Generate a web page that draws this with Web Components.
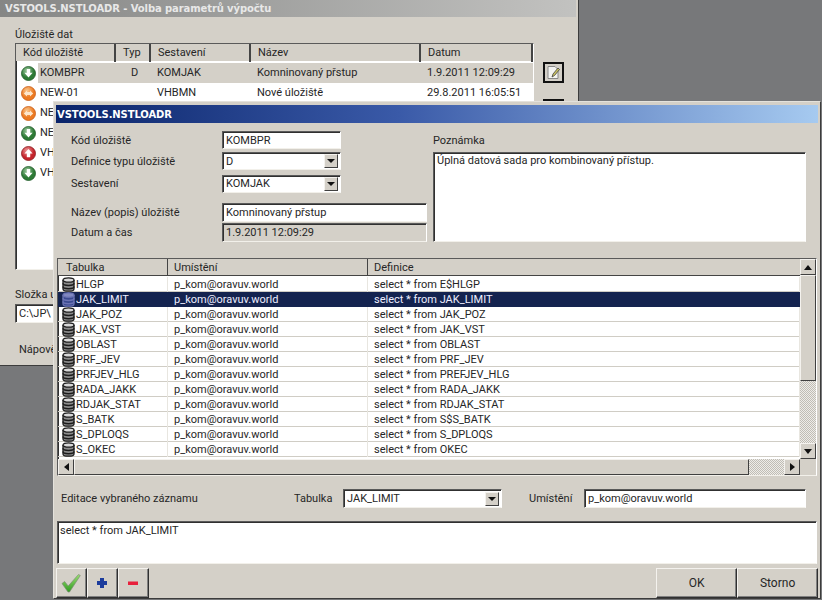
<!DOCTYPE html>
<html>
<head>
<meta charset="utf-8">
<title>VSTOOLS.NSTLOADR</title>
<style>
html, body { margin: 0; height: 100%; overflow: hidden; }
body { background: #77787a; position: relative; font: 11px Roboto, "Liberation Sans", sans-serif; color: #262626; }
#back { left: 0; top: 0; width: 579px; height: 366px; }
#front { left: 53px; top: 101px; width: 768px; height: 498px; }
</style>
</head>
<body>

<ui-window id="back" inactive>
  <span slot="title">VSTOOLS.NSTLOADR - Volba parametrů výpočtu</span>
  <store-panel></store-panel>
</ui-window>

<ui-window id="front">
  <span slot="title">VSTOOLS.NSTLOADR</span>
  <detail-form></detail-form>
  <source-grid></source-grid>
  <edit-panel></edit-panel>
</ui-window>

<script>
const SUNKEN = `
    border: 1px solid; border-color: #5a5a5a #fff #f2f0ea #5a5a5a;
    box-shadow: inset 1px 1px #303030;`;

// Window frame with a gradient title bar
class UiWindow extends HTMLElement {
    constructor() {
        super();
        this.attachShadow({ mode: 'open' });
        this.shadowRoot.innerHTML = `
            <style>
                :host {
                    position: absolute;
                    display: flex;
                    flex-direction: column;
                    box-sizing: border-box;
                    background: #d4d0c8;
                    border: 1px solid;
                    border-color: #e4e2dc #3c3c3c #3c3c3c #e4e2dc;
                    padding: 3px 2px 0;
                }
                .title {
                    height: 18px;
                    flex: none;
                    padding-left: 1px;
                    display: flex;
                    align-items: center;
                    font: bold 10px "DejaVu Sans", sans-serif;
                    letter-spacing: -.1px;
                    color: #fff;
                    background: linear-gradient(90deg, #0a246a 0%, #3a5aa8 45%, #a6caf0 100%);
                    white-space: nowrap;
                }
                :host([inactive]) { padding-top: 0; padding-left: 0; border-top: 0; border-left: 0; }
                :host([inactive]) .title {
                    height: 17px;
                    padding-left: 5px;
                    color: #e8e8e8;
                    background: linear-gradient(90deg, #858685 0%, #c2c2c0 100%);
                }
            </style>
            <div class="title"><slot name="title"></slot></div>
            <slot></slot>
        `;
    }
}

// Sunken edit box / combo box; the value is passed through the slot
class UiField extends HTMLElement {
    constructor() {
        super();
        this.attachShadow({ mode: 'open' });
        this.shadowRoot.innerHTML = `
            <style>
                :host {
                    display: flex;
                    box-sizing: border-box;
                    height: 18px;
                    background: #fff;
                    align-items: center;
                    padding: 0 2px 0 3px;
                    white-space: nowrap;
                    overflow: hidden;
                    ${SUNKEN}
                }
                :host([disabled]) { background: #d4d0c8; }
                .value { flex: 1; overflow: hidden; }
                .arrow { display: none; }
                :host([combo]) .arrow {
                    display: flex;
                    flex: none;
                    width: 14px;
                    height: 14px;
                    box-sizing: border-box;
                    align-items: center;
                    justify-content: center;
                    background: #d4d0c8;
                    border: 1px solid;
                    border-color: #f4f2ee #404040 #404040 #f4f2ee;
                }
                .arrow i {
                    border: 4px solid transparent;
                    border-top: 4px solid #111;
                    border-bottom: 0;
                }
            </style>
            <span class="value"><slot></slot></span>
            <span class="arrow"><i></i></span>
        `;
    }
}

// Scrollbar, the sizes of the parts come from attributes
class UiScrollbar extends HTMLElement {
    constructor() {
        super();
        this.attachShadow({ mode: 'open' });
    }

    connectedCallback() {
        const horizontal = this.hasAttribute('horizontal');
        const arrow = (dir) => {
            const a = {
                up: 'border-bottom:5px solid #111;border-top:0',
                down: 'border-top:5px solid #111;border-bottom:0',
                left: 'border-right:5px solid #111;border-left:0',
                right: 'border-left:5px solid #111;border-right:0'
            };
            return `<div class="btn"><i style="${a[dir]}"></i></div>`;
        };
        this.shadowRoot.innerHTML = `
            <style>
                :host {
                    display: flex;
                    flex-direction: ${horizontal ? 'row' : 'column'};
                    box-sizing: border-box;
                    background-color: #e6e4df;
                    background-image: conic-gradient(#c0bdb5 25%, #eeece8 0 50%, #c0bdb5 0 75%, #eeece8 0);
                    background-size: 2px 2px;
                }
                .btn, .thumb {
                    box-sizing: border-box;
                    background: #d4d0c8;
                    border: 1px solid;
                    border-color: #f4f2ee #404040 #404040 #f4f2ee;
                    flex: none;
                }
                .btn {
                    width: ${horizontal ? '16px' : '100%'};
                    height: ${horizontal ? '100%' : '16px'};
                    display: flex;
                    align-items: center;
                    justify-content: center;
                }
                .btn i { border: 4px solid transparent; }
                .thumb { ${horizontal ? 'width' : 'height'}: ${this.getAttribute('thumb')}px; }
                .rest { flex: 1; }
            </style>
            ${arrow(horizontal ? 'left' : 'up')}
            <div class="thumb"></div>
            <div class="rest"></div>
            ${arrow(horizontal ? 'right' : 'down')}
        `;
    }
}

// Round status icon with a white arrow
class StatusIcon extends HTMLElement {
    constructor() {
        super();
        this.attachShadow({ mode: 'open' });
    }

    connectedCallback() {
        const kind = this.getAttribute('kind');
        const colors = {
            down: ['#9cc89c', '#2d7a35', '#1f5a28'],
            up: ['#ee9a9a', '#c4242c', '#8c1a20'],
            both: ['#fac890', '#ec7a22', '#c85a14']
        }[kind];
        const arrows = {
            down: '<path d="M5.800 3h3.400v3.800h2.400L7.500 11.500 3.400 6.800h2.400z" fill="#fff"/>',
            up: '<path d="M7.500 3l4.100 4.600H9.200v3.600H5.800V7.600H3.400z" fill="#fff"/>',
            both: '<path d="M2.800 7.500L6 4.400V6h3V4.400l3.200 3.100L9 10.600V9H6v1.600z" fill="#fde6cc"/>'
        }[kind];
        this.shadowRoot.innerHTML = `
            <style>:host { display: inline-flex; width: 15px; height: 15px; flex: none; }</style>
            <svg width="15" height="15" viewBox="0 0 15 15">
                <defs><radialGradient id="g" cx=".4" cy=".3" r=".8">
                    <stop offset="0" stop-color="${colors[0]}"/>
                    <stop offset=".6" stop-color="${colors[1]}"/>
                </radialGradient></defs>
                <circle cx="7.500" cy="7.500" r="7" fill="url(#g)" stroke="${colors[2]}" stroke-width=".8"/>
                ${arrows}
            </svg>
        `;
    }
}

// Database cylinder in the grid rows
class DbIcon extends HTMLElement {
    constructor() {
        super();
        this.attachShadow({ mode: 'open' });
    }

    connectedCallback() {
        const selected = this.hasAttribute('selected');
        const line = selected ? '#6c74b4' : '#1c1c1c';
        const fill = selected ? '#3a4a90' : '#8c8c8c';
        const top = selected ? '#8088c0' : '#d8d8d8';
        this.shadowRoot.innerHTML = `
            <style>:host { display: inline-flex; width: 13px; height: 15px; flex: none; }</style>
            <svg width="13" height="15" viewBox="0 0 13 15">
                <path d="M1 3v9c0 1.300 2.400 2.200 5.500 2.200S12 13.300 12 12V3" fill="${fill}" stroke="${line}" stroke-width="1.300"/>
                <ellipse cx="6.500" cy="3" rx="5.500" ry="2.200" fill="${top}" stroke="${line}" stroke-width="1.300"/>
                <path d="M1 6.300c0 1.300 2.400 2.200 5.500 2.200S12 7.600 12 6.300M1 9.500c0 1.300 2.400 2.200 5.500 2.200S12 10.800 12 9.500" fill="none" stroke="${line}" stroke-width="1.500"/>
            </svg>
        `;
    }
}

// Raised button, text or icon through the slot
class UiButton extends HTMLElement {
    constructor() {
        super();
        this.attachShadow({ mode: 'open' });
        this.shadowRoot.innerHTML = `
            <style>
                :host {
                    display: flex;
                    box-sizing: border-box;
                    align-items: center;
                    justify-content: center;
                    height: 30px;
                    background: #d4d0c8;
                    border: 1px solid;
                    border-color: #f4f2ee #303030 #303030 #f4f2ee;
                    box-shadow: inset -1px -1px #808080;
                    font-size: 12px;
                }
            </style>
            <slot></slot>
        `;
    }
}

// The partly covered window behind the dialog
class StorePanel extends HTMLElement {
    constructor() {
        super();
        this.attachShadow({ mode: 'open' });
    }

    connectedCallback() {
        const rows = [
            ['down', 'KOMBPR', 'D', 'KOMJAK', 'Komninovaný přstup', '1.9.2011 12:09:29'],
            ['both', 'NEW-01', '', 'VHBMN', 'Nové úložiště', '29.8.2011 16:05:51'],
            ['both', 'NE'],
            ['down', 'NE'],
            ['up', 'VH'],
            ['down', 'VH']
        ];
        this.shadowRoot.innerHTML = `
            <style>
                :host { display: block; padding: 11px 0 0 15px; flex: 1; }
                .caption { height: 15px; }
                .top { display: flex; gap: 9px; }
                .list {
                    box-sizing: border-box;
                    width: 519px;
                    height: 227px;
                    background: #fff;
                    ${SUNKEN}
                }
                .row, .head { display: grid; grid-template-columns: 100px 35px 100px 170px 1fr; }
                .head { height: 17px; background: #d4d0c8; margin-bottom: 2px; }
                .head span {
                    border-right: 2px solid #444;
                    padding-left: 7px;
                    line-height: 18px;
                }
                .row { height: 20px; line-height: 20px; margin-left: 1px; }
                .row .c0 { display: flex; gap: 3px; align-items: center; padding-left: 4px; }
                .row .c0 status-icon { margin-right: 1px; }
                .row.sel { background: linear-gradient(90deg, #fff 21px, #d4d0c8 21px); }
                .row span { padding-left: 5px; white-space: nowrap; }
                .row .typ { text-align: center; padding: 0; }
                .side { display: flex; flex-direction: column; gap: 16px; padding-top: 19px; }
                .tool {
                    box-sizing: border-box;
                    width: 21px;
                    height: 21px;
                    border: 2px solid #111;
                    display: flex;
                    align-items: center;
                    justify-content: center;
                }
                .folder { margin-top: 18px; height: 15px; }
                ui-field { width: 200px; margin-top: 1px; height: 19px; }
                .help { margin: 20px 0 0 4px; }
            </style>
            <div class="caption">Úložiště dat</div>
            <div class="top">
                <div class="list">
                    <div class="head">
                        <span>Kód úložiště</span><span>Typ</span><span>Sestavení</span><span>Název</span><span>Datum</span>
                    </div>
                    ${rows.map((r, i) => `
                        <div class="row ${i === 0 ? 'sel' : ''}">
                            <span class="c0"><status-icon kind="${r[0]}"></status-icon>${r[1]}</span>
                            <span class="typ">${r[2] || ''}</span>
                            <span>${r[3] || ''}</span>
                            <span>${r[4] || ''}</span>
                            <span>${r[5] || ''}</span>
                        </div>`).join('')}
                </div>
                <div class="side">
                    <div class="tool">
                        <svg width="15" height="15" viewBox="0 0 15 15">
                            <path d="M2 1.500h7l3 3v9H2z" fill="#f4f4f2" stroke="#888"/>
                            <path d="M6 12l1-3 5-6 1.500 1.500-5 6z" fill="#c8c060" stroke="#444" stroke-width=".8"/>
                        </svg>
                    </div>
                    <div class="tool"></div>
                </div>
            </div>
            <div class="folder">Složka u</div>
            <ui-field>C:\\JP\\</ui-field>
            <div class="help">Nápově</div>
        `;
    }
}

// Upper part of the dialog: fields on the left, note on the right
class DetailForm extends HTMLElement {
    constructor() {
        super();
        this.attachShadow({ mode: 'open' });
        this.shadowRoot.innerHTML = `
            <style>
                :host { display: grid; grid-template-columns: 377px 373px; height: 135px; flex: none; }
                .fields {
                    display: grid;
                    grid-template-columns: 151px 1fr;
                    grid-template-rows: 18px 18px 18px auto;
                    row-gap: 3px;
                    align-content: start;
                    padding: 8px 0 0 15px;
                    align-items: center;
                }
                .fields ui-field { width: 119px; }
                .fields ui-field.wide { width: 205px; height: 19px; }
                .sec { margin-top: 3px; }
                .lower {
                    grid-column: 1 / 3;
                    display: grid;
                    grid-template-columns: 151px 1fr;
                    grid-auto-rows: 19px;
                    row-gap: 1px;
                    margin-top: 9px;
                    align-items: center;
                }
                .note { padding-top: 11px; }
                .note label { display: block; height: 18px; line-height: 14px; }
                .memo {
                    box-sizing: border-box;
                    height: 90px;
                    background: #fff;
                    padding: 1px 3px;
                    ${SUNKEN}
                }
            </style>
            <div class="fields">
                <span>Kód úložiště</span><ui-field>KOMBPR</ui-field>
                <span>Definice typu úložiště</span><ui-field combo>D</ui-field>
                <span class="sec">Sestavení</span><ui-field class="sec" combo>KOMJAK</ui-field>
                <div class="lower">
                    <span>Název (popis) úložiště</span><ui-field class="wide">Komninovaný přstup</ui-field>
                    <span>Datum a čas</span><ui-field class="wide" disabled>1.9.2011 12:09:29</ui-field>
                </div>
            </div>
            <div class="note">
                <label>Poznámka</label>
                <div class="memo">Úplná datová sada pro kombinovaný přístup.</div>
            </div>
        `;
    }
}

// Grid with the data sources
class SourceGrid extends HTMLElement {
    constructor() {
        super();
        this.attachShadow({ mode: 'open' });
    }

    connectedCallback() {
        const rows = [
            ['HLGP', 'E$HLGP'], ['JAK_LIMIT', 'JAK_LIMIT'], ['JAK_POZ', 'JAK_POZ'], ['JAK_VST', 'JAK_VST'],
            ['OBLAST', 'OBLAST'], ['PRF_JEV', 'PRF_JEV'], ['PRFJEV_HLG', 'PREFJEV_HLG'], ['RADA_JAKK', 'RADA_JAKK'],
            ['RDJAK_STAT', 'RDJAK_STAT'], ['S_BATK', 'S$S_BATK'], ['S_DPLOQS', 'S_DPLOQS'], ['S_OKEC', 'OKEC']
        ];
        this.shadowRoot.innerHTML = `
            <style>
                :host {
                    display: grid;
                    grid-template-columns: 742px 16px;
                    grid-template-rows: 200px 16px;
                    box-sizing: border-box;
                    width: 760px;
                    height: 218px;
                    margin-left: 1px;
                    background: #fff;
                    flex: none;
                    ${SUNKEN}
                }
                .rows { overflow: hidden; }
                .head, .row { display: grid; grid-template-columns: 108px 200px 1fr; }
                .head { height: 17px; background: #d4d0c8; box-shadow: inset 0 -1px #444; margin-bottom: 1px; padding-left: 2px; }
                .head span { border-right: 1px solid #444; padding-left: 6px; line-height: 17px; }
                .head span:last-child { border: 0; }
                .row {
                    height: 15px;
                    line-height: 15px;
                    box-sizing: border-box;
                    border-bottom: 1px solid #d0cdc5;
                    padding-left: 2px;
                    white-space: nowrap;
                }
                .row span { padding-left: 6px; border-right: 1px solid #e8e6e0; }
                .row .name { display: flex; gap: 1px; padding-left: 2px; }
                .row.sel { background: #14234f; color: #eef; border-bottom-color: #14234f; }
                .row.sel span { border-color: #14234f; }
                .corner { background: #d4d0c8; }
            </style>
            <div class="rows">
                <div class="head"><span>Tabulka</span><span>Umístění</span><span>Definice</span></div>
                ${rows.map((r, i) => `
                    <div class="row ${i === 1 ? 'sel' : ''}">
                        <span class="name"><db-icon ${i === 1 ? 'selected' : ''}></db-icon>${r[0]}</span>
                        <span>p_kom@oravuv.world</span>
                        <span>select * from ${r[1]}</span>
                    </div>`).join('')}
            </div>
            <ui-scrollbar thumb="106"></ui-scrollbar>
            <ui-scrollbar horizontal thumb="675"></ui-scrollbar>
            <div class="corner"></div>
        `;
    }
}

// Lower part: editing of the selected row and the dialog buttons
class EditPanel extends HTMLElement {
    constructor() {
        super();
        this.attachShadow({ mode: 'open' });
        this.shadowRoot.innerHTML = `
            <style>
                :host { display: block; flex: none; }
                .line {
                    display: grid;
                    grid-template-columns: 233px 49px 159px 27px 55px 222px;
                    align-items: center;
                    height: 19px;
                    margin: 13px 0 0 5px;
                }
                .line ui-field { height: 19px; }
                .sql {
                    box-sizing: border-box;
                    width: 760px;
                    height: 43px;
                    margin: 13px 0 0 1px;
                    background: #fff;
                    padding: 2px 2px;
                    ${SUNKEN}
                }
                .actions { display: flex; margin-top: 4px; }
                .actions ui-button { width: 31px; }
                .actions .wide { width: 81px; }
                .spacer { width: 508px; }
            </style>
            <div class="line">
                <span>Editace vybraného záznamu</span>
                <span>Tabulka</span>
                <ui-field combo>JAK_LIMIT</ui-field>
                <span></span>
                <span>Umístění</span>
                <ui-field>p_kom@oravuv.world</ui-field>
            </div>
            <div class="sql">select * from JAK_LIMIT</div>
            <div class="actions">
                <ui-button>
                    <svg width="22" height="20" viewBox="0 0 22 20">
                        <defs><linearGradient id="c" x1="0" y1="0" x2="0" y2="1">
                            <stop offset="0" stop-color="#9ade70"/><stop offset="1" stop-color="#2f9a22"/>
                        </linearGradient></defs>
                        <path d="M2 10.500l2.600-2 3.600 4.500L18.500 1.500l1.800 1-10.800 16.500H8z" fill="url(#c)" stroke="#7c8c74" stroke-width=".7"/>
                    </svg>
                </ui-button>
                <ui-button>
                    <svg width="12" height="12" viewBox="0 0 12 12"><path d="M4 1h4v3h3v4H8v3H4V8H1V4h3z" fill="#1c3c9c"/></svg>
                </ui-button>
                <ui-button>
                    <svg width="12" height="12" viewBox="0 0 12 12"><path d="M1 4.500h10v3.500H1z" fill="#e8203c"/></svg>
                </ui-button>
                <div class="spacer"></div>
                <ui-button class="wide">OK</ui-button>
                <ui-button class="wide">Storno</ui-button>
            </div>
        `;
    }
}

customElements.define('ui-window', UiWindow);
customElements.define('ui-field', UiField);
customElements.define('ui-scrollbar', UiScrollbar);
customElements.define('status-icon', StatusIcon);
customElements.define('db-icon', DbIcon);
customElements.define('ui-button', UiButton);
customElements.define('store-panel', StorePanel);
customElements.define('detail-form', DetailForm);
customElements.define('source-grid', SourceGrid);
customElements.define('edit-panel', EditPanel);
</script>
</body>
</html>
